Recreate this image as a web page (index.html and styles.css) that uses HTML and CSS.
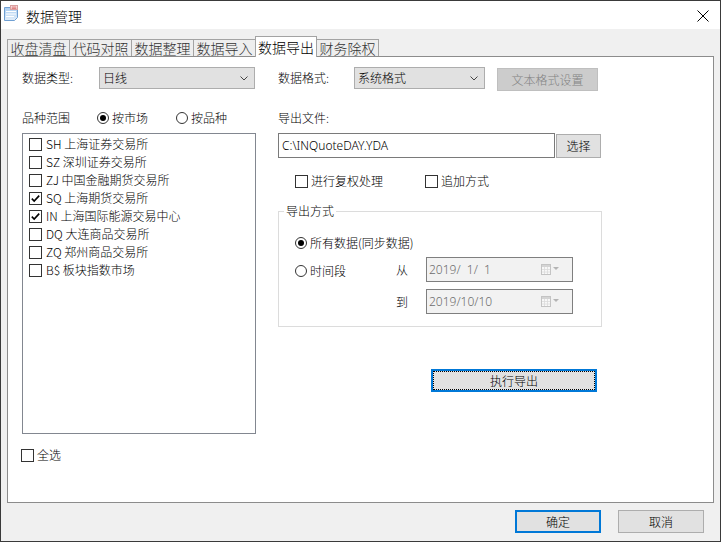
FILE: index.html
```html
<!DOCTYPE html>
<html lang="zh-CN">
<head>
<meta charset="utf-8">
<title>数据管理</title>
<link rel="stylesheet" href="styles.css">
</head>
<body>
<div class="window">
  <div class="titlebar">
    <svg class="app-icon" width="14" height="16" viewBox="0 0 14 16">
      <defs>
        <linearGradient id="ig" x1="0" y1="0" x2="0" y2="1">
          <stop offset="0" stop-color="#a9cdf0"/>
          <stop offset="1" stop-color="#e2eefa"/>
        </linearGradient>
      </defs>
      <path d="M0.5 2.5 H13.5 V12.5 L10.5 15.5 H0.5 Z" fill="url(#ig)" stroke="#6f9fd2"/>
      <rect x="6.5" y="0.5" width="7" height="4" fill="#ffffff" stroke="#d9a0a0"/>
      <line x1="7.5" y1="2" x2="12.5" y2="2" stroke="#d04040" stroke-width="0.8"/>
      <line x1="7.5" y1="3.3" x2="12.5" y2="3.3" stroke="#d04040" stroke-width="0.8"/>
      <line x1="2" y1="6.5" x2="12" y2="6.5" stroke="#ffffff"/>
      <line x1="2" y1="9" x2="12" y2="9" stroke="#ffffff"/>
      <line x1="2" y1="11.5" x2="10" y2="11.5" stroke="#ffffff"/>
    </svg>
    <span class="title">数据管理</span>
    <svg class="close" width="12" height="12" viewBox="0 0 12 12">
      <path d="M0.5 0.5 L11.5 11.5 M11.5 0.5 L0.5 11.5" stroke="#000" stroke-width="1"/>
    </svg>
  </div>
  <div class="client">
    <div class="tabs">
      <div class="tab">收盘清盘</div>
      <div class="tab">代码对照</div>
      <div class="tab">数据整理</div>
      <div class="tab">数据导入</div>
      <div class="tab active">数据导出</div>
      <div class="tab">财务除权</div>
    </div>
    <div class="panel">
      <div class="col-left">
        <div class="row-top">
          <span class="lbl lbl-type">数据类型:</span>
          <div class="combo combo-type">
            <span>日线</span>
            <svg class="chev" width="8" height="5" viewBox="0 0 8 5"><path d="M0.5 0.5 L4 4 L7.5 0.5" fill="none" stroke="#444"/></svg>
          </div>
        </div>
        <div class="row-mid">
          <span class="lbl lbl-range">品种范围</span>
          <span class="radio"><span class="rb on"></span>按市场</span>
          <span class="radio radio-2"><span class="rb"></span>按品种</span>
        </div>
        <div class="listbox">
          <div class="item"><span class="cb"></span>SH 上海证券交易所</div>
          <div class="item"><span class="cb"></span>SZ 深圳证券交易所</div>
          <div class="item"><span class="cb"></span>ZJ 中国金融期货交易所</div>
          <div class="item"><span class="cb"><svg width="11" height="11" viewBox="0 0 11 11"><path d="M1.8 5.6 L4.2 8 L9.2 2.6" fill="none" stroke="#000" stroke-width="1.6"/></svg></span>SQ 上海期货交易所</div>
          <div class="item"><span class="cb"><svg width="11" height="11" viewBox="0 0 11 11"><path d="M1.8 5.6 L4.2 8 L9.2 2.6" fill="none" stroke="#000" stroke-width="1.6"/></svg></span>IN 上海国际能源交易中心</div>
          <div class="item"><span class="cb"></span>DQ 大连商品交易所</div>
          <div class="item"><span class="cb"></span>ZQ 郑州商品交易所</div>
          <div class="item"><span class="cb"></span>B$ 板块指数市场</div>
        </div>
        <div class="selall"><span class="cb2"></span>全选</div>
      </div>
      <div class="col-right">
        <div class="row-top">
          <span class="lbl lbl-fmt">数据格式:</span>
          <div class="combo combo-fmt">
            <span>系统格式</span>
            <svg class="chev" width="8" height="5" viewBox="0 0 8 5"><path d="M0.5 0.5 L4 4 L7.5 0.5" fill="none" stroke="#444"/></svg>
          </div>
          <div class="btn-disabled">文本格式设置</div>
        </div>
        <div class="row-mid">
          <span class="lbl">导出文件:</span>
        </div>
        <div class="file-row">
          <div class="field"><span class="field-text">C:\INQuoteDAY.YDA</span></div>
          <div class="btn btn-pick">选择</div>
        </div>
        <div class="check-row">
          <span class="chk"><span class="cb2"></span>进行复权处理</span>
          <span class="chk chk-2"><span class="cb2"></span>追加方式</span>
        </div>
        <div class="group">
          <span class="legend">导出方式</span>
          <div class="group-grid">
            <span class="radio g-all"><span class="rb on"></span>所有数据(同步数据)</span>
            <span class="radio g-period"><span class="rb"></span>时间段</span>
            <span class="g-lbl">从</span>
            <div class="date">
              <span class="date-text">2019/  1/  1</span>
              <svg class="cal" width="20" height="11" viewBox="0 0 20 11">
                <rect x="0.5" y="0.5" width="9" height="10" fill="#f8f8f8" stroke="#c4c4c4"/>
                <rect x="1" y="1" width="8" height="2" fill="#d4d4d4"/>
                <path d="M3.5 3 V10 M6.5 3 V10 M1 5.5 H9 M1 8 H9" stroke="#dadada" stroke-width="0.8"/>
                <path d="M12 3 H18 L15 6 Z" fill="#b4b4b4"/>
              </svg>
            </div>
            <span class="g-lbl g-to">到</span>
            <div class="date date-2">
              <span class="date-text">2019/10/10</span>
              <svg class="cal" width="20" height="11" viewBox="0 0 20 11">
                <rect x="0.5" y="0.5" width="9" height="10" fill="#f8f8f8" stroke="#c4c4c4"/>
                <rect x="1" y="1" width="8" height="2" fill="#d4d4d4"/>
                <path d="M3.5 3 V10 M6.5 3 V10 M1 5.5 H9 M1 8 H9" stroke="#dadada" stroke-width="0.8"/>
                <path d="M12 3 H18 L15 6 Z" fill="#b4b4b4"/>
              </svg>
            </div>
          </div>
        </div>
        <div class="btn-exec"><div class="focus">执行导出</div></div>
      </div>
    </div>
    <div class="footer">
      <div class="btn btn-default">确定</div>
      <div class="btn">取消</div>
    </div>
  </div>
</div>
</body>
</html>
```

FILE: styles.css
```css
* {
  box-sizing: border-box;
  margin: 0;
  padding: 0;
}

body {
  margin: 0;
  font-family: "Noto Sans CJK SC", "Microsoft YaHei", sans-serif;
  font-size: 12px;
  font-weight: 300;
  color: #000;
  background: #fff;
}

.field-text,
.date-text {
  font-family: "Noto Sans", "Noto Sans CJK SC", sans-serif;
}

.window {
  width: 721px;
  height: 542px;
  border: 1px solid #3a3a3a;
  background: #f0f0f0;
  display: flex;
  flex-direction: column;
  overflow: hidden;
}

.titlebar {
  height: 28px;
  flex: none;
  background: #fff;
  display: flex;
  align-items: center;
  padding-left: 3px;
}

.app-icon {
  align-self: flex-start;
  margin-top: 4px;
  flex: none;
}

.title {
  margin-left: 8px;
  font-size: 14px;
  line-height: 18px;
  margin-top: 1px;
}

.close {
  margin-left: auto;
  margin-right: 11px;
  margin-top: 1px;
}

.client {
  flex: 1;
  display: flex;
  flex-direction: column;
}

.tabs {
  height: 27px;
  flex: none;
  display: flex;
  align-items: flex-end;
  padding-left: 6px;
}

.tab {
  width: 63px;
  height: 17px;
  margin-left: -1px;
  border: 1px solid #a3a3a3;
  border-bottom: none;
  background: #eeeeee;
  color: #333;
  font-size: 14px;
  line-height: 15px;
  display: flex;
  align-items: center;
  justify-content: center;
  padding-top: 1px;
}

.tab:first-child {
  margin-left: 0;
}

.tab.active {
  height: 21px;
  margin-bottom: -1px;
  background: #fff;
  color: #000;
  position: relative;
  z-index: 1;
  width: 62px;
  padding-top: 0;
}

.panel {
  margin-left: 6px;
  width: 707px;
  height: 447px;
  flex: none;
  border: 1px solid #8c8c8c;
  background: #fff;
  padding: 10px 0 0 14px;
  display: flex;
  gap: 22px;
}

.col-left {
  width: 234px;
  display: flex;
  flex-direction: column;
}

.col-right {
  width: 324px;
  display: flex;
  flex-direction: column;
}

.row-top {
  height: 22px;
  display: flex;
  align-items: center;
}

.lbl {
  line-height: 16px;
  white-space: nowrap;
}

.lbl-type {
  width: 77px;
}

.lbl-fmt {
  width: 76px;
}

.combo {
  height: 22px;
  background: #e1e1e1;
  border: 1px solid #adadad;
  display: flex;
  align-items: center;
  justify-content: space-between;
  padding: 0 6px 0 3px;
  line-height: 16px;
}

.combo-type {
  width: 156px;
}

.combo-fmt {
  width: 131px;
}

.chev {
  margin-top: 1px;
}

.btn-disabled {
  align-self: flex-start;
  margin-top: 1px;
  margin-left: 12px;
  width: 101px;
  height: 23px;
  background: #cccccc;
  border: 1px solid #bfbfbf;
  color: #838383;
  display: flex;
  align-items: center;
  justify-content: center;
  flex: none;
}

.row-mid {
  margin-top: 20px;
  height: 18px;
  display: flex;
  align-items: center;
}

.lbl-range {
  width: 75px;
}

.radio {
  display: flex;
  align-items: center;
  line-height: 16px;
  white-space: nowrap;
}

.radio-2 {
  margin-left: 28px;
}

.rb {
  width: 12px;
  height: 12px;
  border: 1px solid #333;
  border-radius: 50%;
  margin-right: 3px;
  display: flex;
  align-items: center;
  justify-content: center;
  background: #fff;
  flex: none;
}

.rb.on::after {
  content: "";
  width: 6px;
  height: 6px;
  border-radius: 50%;
  background: #000;
}

.listbox {
  margin-top: 6px;
  height: 301px;
  border: 1px solid #828790;
  background: #fff;
  padding: 1px 0 0 6px;
}

.item {
  height: 18px;
  display: flex;
  align-items: center;
  line-height: 16px;
  white-space: nowrap;
}

.cb {
  width: 13px;
  height: 13px;
  border: 1px solid #333;
  background: #fff;
  margin-right: 4px;
  display: flex;
  align-items: center;
  justify-content: center;
  flex: none;
}

.cb2 {
  width: 13px;
  height: 13px;
  border: 1px solid #333;
  background: #fff;
  margin-right: 3px;
  flex: none;
}

.selall {
  margin-top: 14px;
  margin-left: -1px;
  height: 14px;
  display: flex;
  align-items: center;
  line-height: 16px;
}

.file-row {
  margin-top: 6px;
  display: flex;
  align-items: flex-start;
}

.field {
  width: 277px;
  height: 25px;
  border: 1px solid #7a7a7a;
  background: #fff;
  padding-left: 3px;
  display: flex;
  align-items: center;
  line-height: 16px;
}

.btn {
  width: 86px;
  height: 23px;
  background: #e1e1e1;
  border: 1px solid #adadad;
  display: flex;
  align-items: center;
  justify-content: center;
  line-height: 16px;
  flex: none;
}

.btn-pick {
  width: 45px;
  height: 24px;
  margin-top: 1px;
  margin-left: 1px;
}

.check-row {
  margin-top: 16px;
  height: 14px;
  padding-left: 17px;
  display: flex;
  align-items: center;
}

.chk {
  display: flex;
  align-items: center;
  line-height: 16px;
  white-space: nowrap;
}

.chk-2 {
  margin-left: 42px;
}

.group {
  margin-top: 23px;
  width: 324px;
  border: 1px solid #dcdcdc;
  position: relative;
  padding: 23px 0 12px 16px;
}

.legend {
  position: absolute;
  top: -8px;
  left: 5px;
  padding: 0 2px;
  background: #fff;
  line-height: 14px;
}

.group-grid {
  display: grid;
  grid-template-columns: 101px 30px 147px;
  grid-template-rows: 16px 25px 26px;
  row-gap: 6px;
  align-items: center;
}

.g-all {
  grid-column: 1 / -1;
}

.g-period {
  grid-column: 1;
  grid-row: 2;
  margin-top: 3px;
}

.g-lbl {
  line-height: 16px;
  grid-column: 2;
  grid-row: 2;
}

.g-to {
  grid-row: 3;
  margin-top: 2px;
}

.date {
  grid-column: 3;
  grid-row: 2;
  height: 25px;
  border: 1px solid #7f7f7f;
  background: #f2f2f2;
  display: flex;
  align-items: center;
  padding-left: 2px;
}

.date-2 {
  grid-row: 3;
  align-self: end;
}

.date-text {
  color: #6d6d6d;
  white-space: pre;
  line-height: 16px;
}

.cal {
  margin-left: auto;
  margin-right: 11px;
}

.btn-exec {
  margin-top: 42px;
  margin-left: 153px;
  width: 166px;
  height: 23px;
  border: 2px solid #0078d7;
  background: #e1e1e1;
  padding: 0;
}

.focus {
  height: 100%;
  border: 1px dotted #000;
  display: flex;
  align-items: center;
  justify-content: center;
  line-height: 16px;
}

.footer {
  flex: 1;
  display: flex;
  justify-content: flex-end;
  align-items: flex-start;
  padding-top: 7px;
  padding-right: 16px;
  gap: 17px;
}

.btn-default {
  border: 2px solid #0078d7;
}
```
